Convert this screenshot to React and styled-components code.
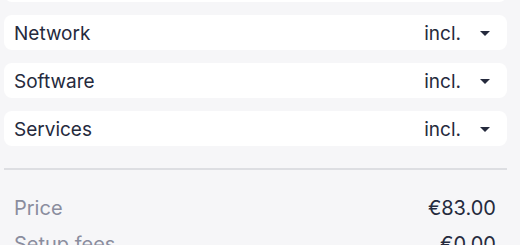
import React from "react";
import styled, { createGlobalStyle } from "styled-components";

const Global = createGlobalStyle`
  html, body { margin: 0; padding: 0; background: #f6f6f8; }
  body { font-family: Inter, "Noto Sans", sans-serif; overflow: hidden; }
`;

const Page = styled.div`
  display: flex;
  flex-direction: column;
  padding: 0 13px 0 4px;
  margin-top: -33px;
`;

const Options = styled.div`
  display: flex;
  flex-direction: column;
  gap: 13px;
`;

const OptionRow = styled.div`
  display: flex;
  align-items: center;
  justify-content: space-between;
  box-sizing: border-box;
  height: 35px;
  padding: 2px 17px 0 10px;
  background: #ffffff;
  border-radius: 8px;
  color: #252a3d;
  font-size: 19px;
`;

const Select = styled.div`
  display: flex;
  align-items: center;
  gap: 19px;
`;

const Caret = styled.span`
  width: 0;
  height: 0;
  margin-top: -1px;
  border-left: 5px solid transparent;
  border-right: 5px solid transparent;
  border-top: 5px solid #252a3d;
`;

const Divider = styled.hr`
  margin: 22px 0 0;
  border: none;
  height: 2px;
  background: #dddee2;
`;

const Summary = styled.div`
  display: flex;
  flex-direction: column;
  padding: 26px 11px 0 10px;
  gap: 13px;
`;

const SummaryRow = styled.div`
  display: flex;
  justify-content: space-between;
  align-items: center;
  height: 23px;
  font-size: 20px;
`;

const Label = styled.span`
  color: #8a8d9e;
`;

const Value = styled.span`
  color: #252a3d;
`;

const options = ["Hardware", "Network", "Software", "Services"];
const summary = [
  ["Price", "€83.00"],
  ["Setup fees", "€0.00"],
];

export default function App() {
  return (
    <>
      <Global />
      <Page>
        <Options>
          {options.map((o) => (
            <OptionRow key={o}>
              <span>{o}</span>
              <Select>
                <span>incl.</span>
                <Caret />
              </Select>
            </OptionRow>
          ))}
        </Options>
        <Divider />
        <Summary>
          {summary.map(([l, v]) => (
            <SummaryRow key={l}>
              <Label>{l}</Label>
              <Value>{v}</Value>
            </SummaryRow>
          ))}
        </Summary>
      </Page>
    </>
  );
}
